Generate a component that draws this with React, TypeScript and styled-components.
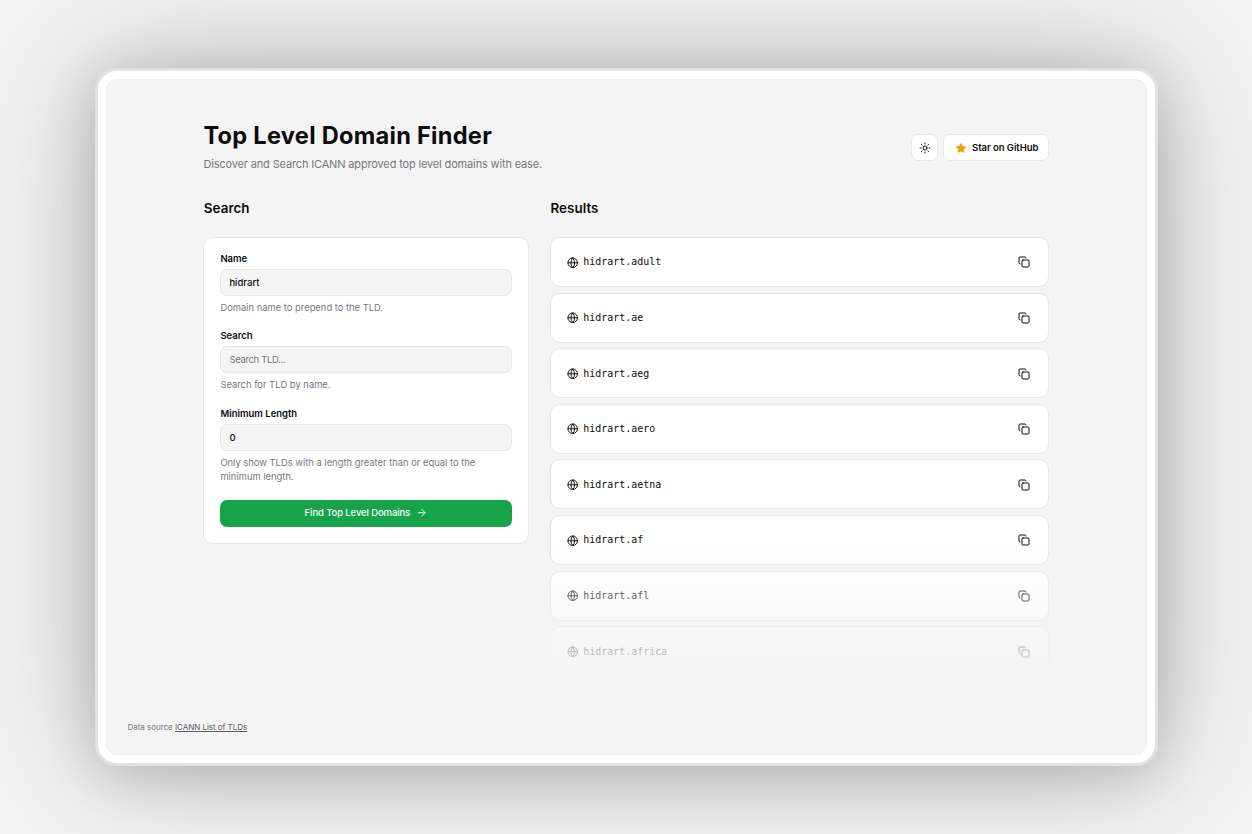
import React from "react";
import styled, { createGlobalStyle } from "styled-components";
import { ArrowRight, Copy, Globe } from "lucide-react";

const GlobalStyle = createGlobalStyle`
  *, *::before, *::after { box-sizing: border-box; }
  body {
    margin: 0;
    font-family: Inter, "Liberation Sans", sans-serif;
    color: #0c0c0d;
  }
  h1, h2, p { margin: 0; }
`;

const Backdrop = styled.div`
  width: 100%;
  height: 834px;
  overflow: hidden;
  padding: 68px 94px 68px 95px;
  background: #f3f3f3;
`;

const Frame = styled.div`
  height: 698px;
  padding: 8px;
  border: 3px solid #e2e2e2;
  border-radius: 22px;
  background: #ffffff;
  box-shadow: 0 0 130px rgba(0, 0, 0, 0.25), 0 8px 50px rgba(0, 0, 0, 0.15);
`;

const Screen = styled.div`
  position: relative;
  height: 100%;
  display: flex;
  flex-direction: column;
  padding: 42px 97px 0 96.4px;
  border: 1px solid #eeeff0;
  border-radius: 11px;
  background: #f4f4f4;
  overflow: hidden;
`;

const Header = styled.header`
  display: flex;
  justify-content: space-between;
  width: 846px;
  height: 72px;
`;

const Title = styled.h1`
  font-size: 23.6px;
  line-height: 28px;
  font-weight: 700;
  letter-spacing: 0.27px;
`;

const Subtitle = styled.p`
  margin-top: 5px;
  font-size: 11px;
  line-height: 18px;
  letter-spacing: -0.15px;
  color: #77777d;
`;

const Actions = styled.div`
  display: flex;
  gap: 5px;
  padding-top: 12px;
`;

const ActionButton = styled.button<{ $square?: boolean }>`
  display: flex;
  align-items: center;
  justify-content: center;
  gap: 5px;
  width: ${(p) => (p.$square ? "27.5px" : "106px")};
  height: 27px;
  padding: 1px 0 0 0.6px;
  border: 1px solid #e6e6e8;
  border-radius: 7px;
  background: #ffffff;
  color: #0c0c0d;
  font: 600 9.5px/14px Inter, sans-serif;
  letter-spacing: -0.05px;
`;

const Columns = styled.main`
  display: flex;
  gap: 21.2px;
`;

const SearchColumn = styled.section`
  width: 325.6px;
`;

const ResultsColumn = styled.section`
  width: 499.2px;
`;

const Heading = styled.h2`
  height: 43px;
  padding-left: 0.4px;
  font-size: 13.4px;
  line-height: 28px;
  font-weight: 600;
  letter-spacing: 0.05px;
`;

const FormCard = styled.form`
  height: 307px;
  padding: 15px 16px 0;
  border: 1px solid #e6e6e8;
  border-radius: 10px;
  background: #ffffff;
`;

const Field = styled.div`
  display: flex;
  flex-direction: column;
  margin-bottom: 15.3px;
`;

const Label = styled.label`
  font-size: 9.5px;
  line-height: 12px;
  font-weight: 600;
  margin-bottom: 4px;
`;

const Input = styled.input`
  height: 27px;
  padding: 0 8px;
  border: 1px solid #e6e6e8;
  border-radius: 7px;
  background: #f4f4f4;
  color: #0c0c0d;
  font: 500 9.5px/14px Inter, sans-serif;
  outline: none;
  &::placeholder { color: #77777d; font-weight: 400; letter-spacing: -0.35px; opacity: 1; }
`;

const Hint = styled.p`
  margin-top: 5px;
  font-size: 9.4px;
  line-height: 14px;
  color: #77777d;
`;

const Submit = styled.button`
  display: flex;
  align-items: center;
  justify-content: center;
  gap: 6px;
  width: 100%;
  height: 27px;
  margin-top: 16.4px;
  padding: 0 0 1px;
  border: 0;
  border-radius: 7px;
  background: #17a34a;
  color: #f3fff6;
  font: 500 9.5px/14px Inter, sans-serif;
  letter-spacing: -0.11px;
`;

const ResultList = styled.div`
  display: flex;
  flex-direction: column;
  gap: 5.6px;
`;

const ResultRow = styled.div`
  display: flex;
  align-items: center;
  flex: none;
  height: 50px;
  padding: 0.8px 18px 0 16px;
  border: 1px solid #e6e6e8;
  border-radius: 10px;
  background: #ffffff;
`;

const Domain = styled.span`
  flex: 1;
  margin-left: 4.8px;
  font: 400 9.95px/14px "DejaVu Sans Mono", monospace;
`;

const Fade = styled.div`
  position: absolute;
  left: 443px;
  right: 0;
  top: 464px;
  bottom: 0;
  background: linear-gradient(rgba(243, 243, 243, 0), #f3f3f3 145px);
`;

const Footer = styled.footer`
  position: absolute;
  left: 20.5px;
  bottom: 20px;
  font-size: 8.1px;
  line-height: 14px;
  letter-spacing: -0.08px;
  color: #77777d;
`;

const SourceLink = styled.a`
  color: #5c5c62;
  text-decoration: underline;
`;

const SunIcon = () => (
  <svg width="12" height="12" viewBox="0 0 24 24" fill="none" stroke="currentColor" strokeWidth="2" strokeLinecap="round">
    <circle cx="12" cy="12" r="4" />
    <path d="M12 2v2M12 20v2M4.93 4.93l1.41 1.41M17.66 17.66l1.41 1.41M2 12h2M20 12h2M6.34 17.66l-1.41 1.41M19.07 4.93l-1.41 1.41" />
  </svg>
);

const StarIcon = () => (
  <svg width="12" height="12" viewBox="0 0 24 24" fill="#f59e0b">
    <path d="M10.8 3.2c.5-1.15 1.9-1.15 2.4 0l2.1 5 5.4.45c1.25.1 1.75 1.65.8 2.45l-4.1 3.55 1.25 5.25c.3 1.2-1 2.15-2.05 1.5L12 18.6l-4.6 2.8c-1.05.65-2.35-.3-2.05-1.5l1.25-5.25L2.5 11.1c-.95-.8-.45-2.35.8-2.45l5.4-.45z" />
  </svg>
);

const tlds = ["adult", "ae", "aeg", "aero", "aetna", "af", "afl", "africa"];

export default function App() {
  return (
    <Backdrop>
      <GlobalStyle />
      <Frame>
        <Screen>
          <Header>
            <div>
              <Title>Top Level Domain Finder</Title>
              <Subtitle>Discover and Search ICANN approved top level domains with ease.</Subtitle>
            </div>
            <Actions>
              <ActionButton $square aria-label="Toggle theme"><SunIcon /></ActionButton>
              <ActionButton><StarIcon />Star on GitHub</ActionButton>
            </Actions>
          </Header>
          <Columns>
            <SearchColumn>
              <Heading>Search</Heading>
              <FormCard onSubmit={(e) => e.preventDefault()}>
                <Field>
                  <Label htmlFor="name">Name</Label>
                  <Input id="name" defaultValue="hidrart" />
                  <Hint>Domain name to prepend to the TLD.</Hint>
                </Field>
                <Field>
                  <Label htmlFor="search">Search</Label>
                  <Input id="search" placeholder="Search TLD..." />
                  <Hint>Search for TLD by name.</Hint>
                </Field>
                <Field>
                  <Label htmlFor="length">Minimum Length</Label>
                  <Input id="length" defaultValue="0" />
                  <Hint>Only show TLDs with a length greater than or equal to the minimum length.</Hint>
                </Field>
                <Submit type="submit">Find Top Level Domains<ArrowRight size={11.5} /></Submit>
              </FormCard>
            </SearchColumn>
            <ResultsColumn>
              <Heading>Results</Heading>
              <ResultList>
                {tlds.map((tld) => (
                  <ResultRow key={tld}>
                    <Globe size={11.5} />
                    <Domain>hidrart.{tld}</Domain>
                    <Copy size={12} />
                  </ResultRow>
                ))}
              </ResultList>
            </ResultsColumn>
          </Columns>
          <Fade />
          <Footer>Data source <SourceLink>ICANN List of TLDs</SourceLink></Footer>
        </Screen>
      </Frame>
    </Backdrop>
  );
}
